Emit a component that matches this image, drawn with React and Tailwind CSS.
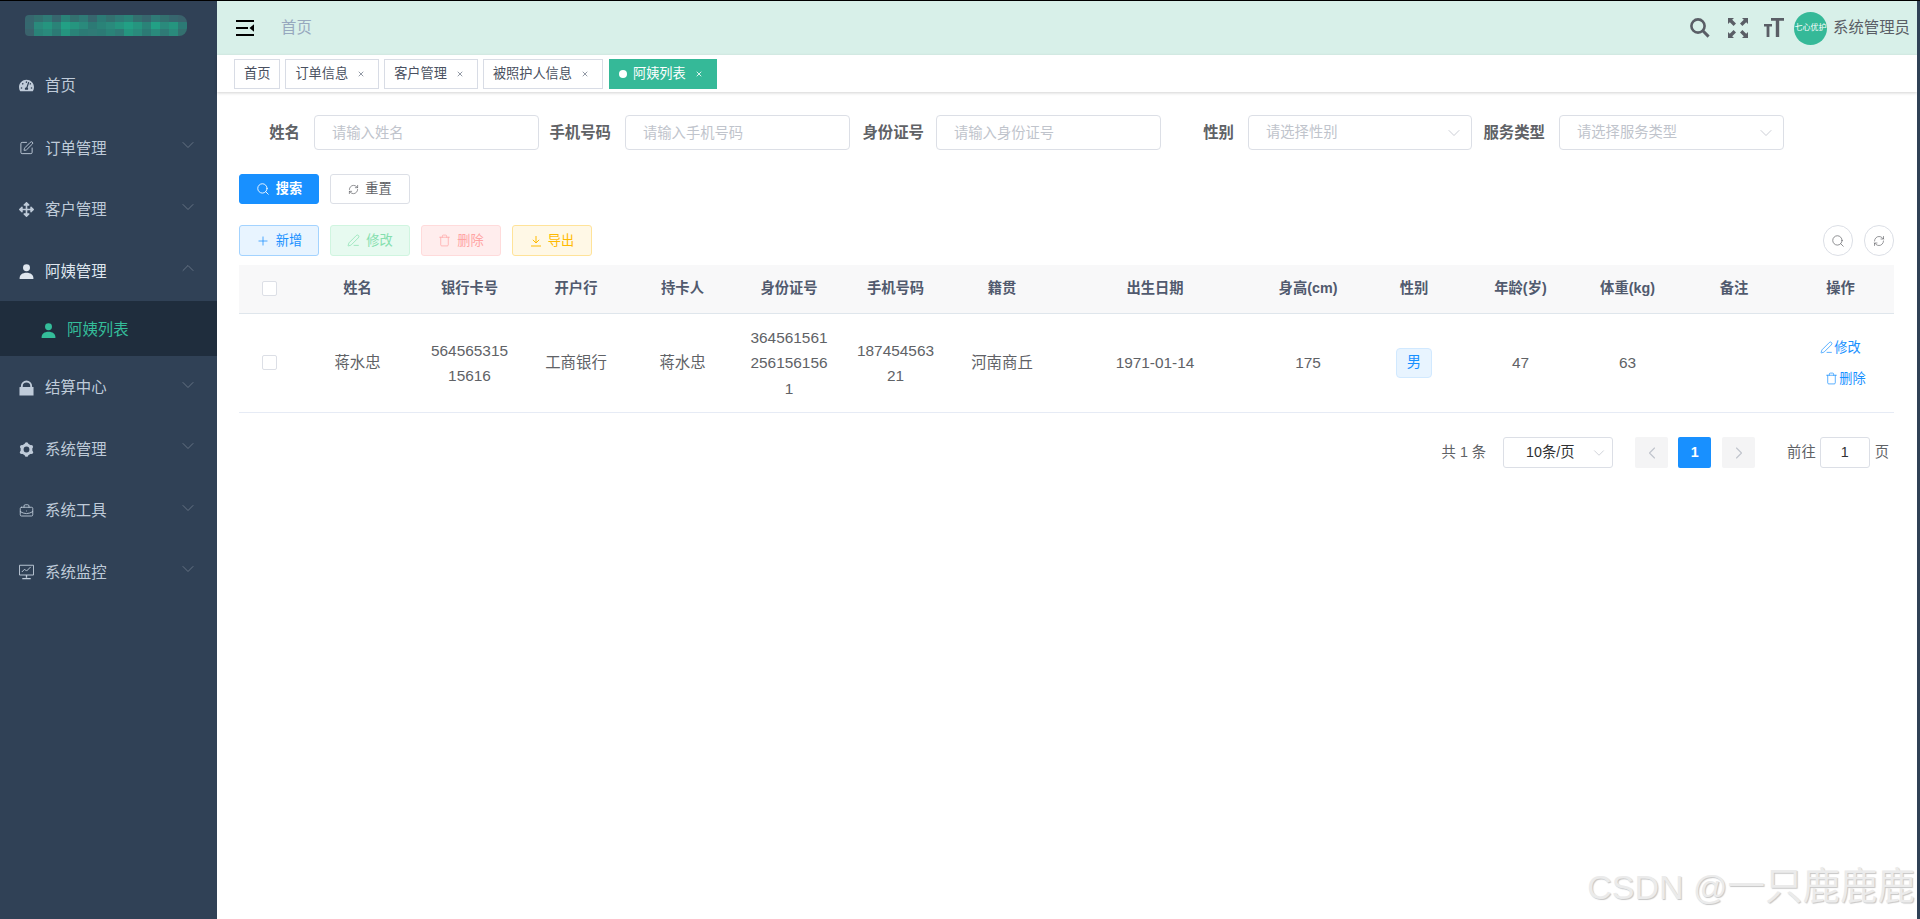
import { BriefcaseBusiness, ChevronDown, ChevronLeft, ChevronRight, ChevronUp, PenLine, Plus, RefreshCw, Search, SquarePen, Trash, X } from "lucide-react";
import { FaArrowsAlt, FaTachometerAlt } from "react-icons/fa";

const font = "font-['Liberation_Sans','Noto_Sans_CJK_SC',sans-serif]";

const UserIcon = ({ className }) => (
    <svg viewBox="0 0 16 16" className={className} fill="currentColor">
        <circle cx="8" cy="4" r="3.7" />
        <path d="M0.6 15.4c0-4 3-6.2 7.4-6.2s7.4 2.2 7.4 6.2c0 .3-.2.6-.6.6H1.2c-.4 0-.6-.3-.6-.6z" />
    </svg>
);

const LockIcon = ({ className }) => (
    <svg viewBox="0 0 16 16" className={className} fill="currentColor">
        <path d="M2 7V6a6 6 0 0 1 12 0v1h-2V6a4 4 0 0 0-8 0v1z" />
        <path d="M0.5 7.5c0-.4.3-.7.7-.7h13.6c.4 0 .7.3.7.7v8.4H0.5z" />
    </svg>
);

const GearIcon = ({ className }) => (
    <svg viewBox="0 0 16 16" className={className} fill="currentColor">
        <circle cx="8" cy="8" r="4.7" fill="none" stroke="currentColor" strokeWidth="3.2" />
        <circle cx="8" cy="2.2" r="2" />
        <circle cx="13" cy="5.1" r="2" />
        <circle cx="13" cy="10.9" r="2" />
        <circle cx="8" cy="13.8" r="2" />
        <circle cx="3" cy="10.9" r="2" />
        <circle cx="3" cy="5.1" r="2" />
    </svg>
);

const MonitorIcon = ({ className }) => (
    <svg viewBox="0 0 16 16" className={className} fill="none" stroke="currentColor" strokeWidth="1">
        <path d="M.5.8h15v10.4H.5z" />
        <path d="M3 8l3-3 2 2 4.5-4.5" />
        <path d="M8 11.2v3M3.5 15h9" strokeWidth="1.4" />
    </svg>
);

const menus = [
    { name: "首页", icon: <FaTachometerAlt className="w-[15px] h-[15px]" /> },
    { name: "订单管理", icon: <SquarePen className="w-[16px] h-[16px]" strokeWidth={1.5} />, arrow: true },
    { name: "客户管理", icon: <FaArrowsAlt className="w-[15px] h-[15px]" />, arrow: true },
    { name: "阿姨管理", icon: <UserIcon className="w-[15px] h-[15px]" />, arrow: true, open: true },
    { name: "结算中心", icon: <LockIcon className="w-[15px] h-[16px]" />, arrow: true },
    { name: "系统管理", icon: <GearIcon className="w-[15px] h-[15px]" />, arrow: true },
    { name: "系统工具", icon: <BriefcaseBusiness className="w-[16px] h-[16px]" strokeWidth={1.4} />, arrow: true },
    { name: "系统监控", icon: <MonitorIcon className="w-[15px] h-[16px]" />, arrow: true },
];

// mosaic that hides the logo in the reference
const logoRows = [
    ["#37666e", "#33706f", "#2f7a76", "#37666e", "#2a8378", "#33706f", "#2f7a76", "#37666e", "#2c7a75", "#33706f", "#2f7a76", "#2a8378", "#33706f", "#37666e", "#2f7a76", "#33706f", "#37666e", "#3a626c"],
    ["#35686f", "#2a8a7c", "#25957f", "#2a8378", "#22a085", "#25957f", "#2a8a7c", "#2c7a75", "#2a8378", "#2a8a7c", "#25957f", "#22a085", "#25957f", "#2a8378", "#22a085", "#2a8a7c", "#25957f", "#2c7a75"],
    ["#3a626c", "#2a8378", "#2a8a7c", "#2c7a75", "#25957f", "#2a8378", "#2c7a75", "#2f7a76", "#2c7a75", "#2a8378", "#2f7a76", "#25957f", "#2a8a7c", "#2c7a75", "#2a8a7c", "#2f7a76", "#2a8a7c", "#33706f"],
];

const Logo = () => (
    <svg width="162" height="21" viewBox="0 0 162 21" className="rounded-r-lg rounded-l-sm">
        {logoRows.map((row, r) => row.map((c, i) => (
            <rect key={`${r}-${i}`} x={i * 9} y={r * 7} width="9" height="7" fill={c} />
        )))}
    </svg>
);

const SideItem = ({ item }) => (
    <>
        <div className={`flex items-center h-[61.5px] pl-[19px] pr-[19px] text-[15.4px] ${item.arrow ? "pt-[2px]" : ""} ${item.open ? "text-[#dfe6ee]" : "text-[#bfcbd9]"}`}>
            <span className="w-[15px] flex justify-center shrink-0">{item.icon}</span>
            <span className="ml-[11px] flex-1">{item.name}</span>
            {item.arrow && (item.open
                ? <ChevronUp className="w-[20px] h-[20px] mb-[6px] text-[#6f7c8c]" strokeWidth={1} />
                : <ChevronDown className="w-[20px] h-[20px] mb-[6px] text-[#6f7c8c]" strokeWidth={1} />)}
        </div>
        {item.open && (
            <div className="flex items-center h-[55px] pl-[41px] pt-[3px] bg-[#1f2d3d] text-[15.4px] text-[#34bd9a]">
                <UserIcon className="w-[15px] h-[15px]" />
                <span className="ml-[11px]">阿姨列表</span>
            </div>
        )}
    </>
);

const tags = [
    { name: "首页", first: true },
    { name: "订单信息" },
    { name: "客户管理" },
    { name: "被照护人信息" },
];

const TextField = ({ label, labelClass, placeholder, select, boxClass }) => (
    <div className="flex items-center">
        <label className={`text-right font-bold text-[15.4px] text-[#606266] ${labelClass}`}>{label}</label>
        {select ? (
            <div className={`flex items-center justify-between h-[35px] pl-[17px] pr-[7px] border border-[#dcdfe6] rounded-[4px] text-[14.3px] text-[#c0c4cc] ${boxClass}`}>
                <span>{placeholder}</span>
                <ChevronDown className="w-[20px] h-[20px]" strokeWidth={1} />
            </div>
        ) : (
            <input readOnly placeholder={placeholder} className="w-[225px] h-[35px] pl-[17px] border border-[#dcdfe6] rounded-[4px] text-[14.3px] outline-none placeholder:text-[#c0c4cc]" />
        )}
    </div>
);

const Btn = ({ className, icon, children }) => (
    <button className={`flex items-center justify-center gap-[6px] w-[80px] border rounded-[3px] text-[13.2px] ${className}`}>
        {icon}
        <span>{children}</span>
    </button>
);

const DownIcon = () => (
    <svg viewBox="0 0 12 12" className="w-[12px] h-[12px]" fill="none" stroke="currentColor" strokeWidth="1">
        <path d="M6 1v6.5M2.8 4.8L6 8l3.2-3.2M1 11h10" />
    </svg>
);

const columns = [
    { title: "", w: "w-[60px]" },
    { title: "姓名", w: "w-[117px]" },
    { title: "银行卡号", w: "w-[107px]" },
    { title: "开户行", w: "w-[106px]" },
    { title: "持卡人", w: "w-[107px]" },
    { title: "身份证号", w: "w-[106px]" },
    { title: "手机号码", w: "w-[107px]" },
    { title: "籍贯", w: "w-[106px]" },
    { title: "出生日期", w: "w-[200px]" },
    { title: "身高(cm)", w: "w-[106px]" },
    { title: "性别", w: "w-[106px]" },
    { title: "年龄(岁)", w: "w-[107px]" },
    { title: "体重(kg)", w: "w-[107px]" },
    { title: "备注", w: "w-[106px]" },
    { title: "操作", w: "w-[107px]" },
];

const Check = () => <span className="block w-[15px] h-[15px] mx-auto border border-[#dcdfe6] rounded-[2px] bg-white" />;

const Td = ({ children }) => (
    <td className="px-[13px] py-[11.5px] text-center text-[15.4px] leading-[25.3px] text-[#606266] break-all">{children}</td>
);

const App = () => {
    return (
        <div className={`relative flex h-screen overflow-hidden bg-white border-t border-black ${font}`}>
            <aside className="w-[217px] shrink-0 bg-[#304156]">
                <div className="flex h-[54px] pl-[25px] pt-[14px]">
                    <Logo />
                </div>
                {menus.map((m) => <SideItem key={m.name} item={m} />)}
            </aside>

            <main className="flex-1 min-w-0 flex flex-col">
                <header className="flex items-center h-[54px] bg-[#d8f0e9] pl-[19px] pr-[7px]">
                    <svg viewBox="0 0 18 16" className="w-[18px] h-[16px] text-black" fill="currentColor">
                        <path d="M0 0h18v2H0zM0 7h12v2H0zM0 14h18v2H0zM18 4.2v7.6L13.5 8z" />
                    </svg>
                    <span className="ml-[27px] text-[15.4px] text-[#97a8be]">首页</span>
                    <div className="ml-auto flex items-center text-[#5a5e66]">
                        <svg viewBox="0 0 20 20" className="w-[20px] h-[20px]" fill="none" stroke="currentColor">
                            <circle cx="8" cy="8" r="6.6" strokeWidth="2.6" />
                            <path d="M12.8 12.8L18.6 18.6" strokeWidth="3" />
                        </svg>
                        <svg viewBox="0 0 20 20" className="ml-[18px] w-[20px] h-[20px]" fill="currentColor">
                            <path d="M0 0h6L4.2 1.8 8 5.6 5.6 8 1.8 4.2 0 6zM20 0v6l-1.8-1.8L14.4 8 12 5.6l3.8-3.8L14 0zM0 20v-6l1.8 1.8L5.6 12 8 14.4l-3.8 3.8L6 20zM20 20h-6l1.8-1.8L12 14.4l2.4-2.4 3.8 3.8L20 14z" />
                        </svg>
                        <svg viewBox="0 0 20 20" className="ml-[16px] w-[20px] h-[20px]" fill="currentColor">
                            <path d="M0 6h8v2.4H5.4V19H2.6V8.4H0zM7 0h13v2.8h-4.8V19h-3.4V2.8H7z" />
                        </svg>
                        <div className="ml-[10px] flex items-center justify-center w-[33px] h-[33px] rounded-full bg-[#35b998] text-[8px] text-white">七心优护</div>
                        <span className="ml-[6px] text-[15.4px]">系统管理员</span>
                    </div>
                </header>

                <div className="flex items-center gap-[5px] h-[37px] pl-[17px] shadow-[0_1px_3px_0_rgba(0,0,0,0.18)]">
                    {tags.map((t) => (
                        <div key={t.name} className={`flex items-center h-[30px] border border-[#d8dce5] text-[13.2px] text-[#495060] ${t.first ? "px-[9px]" : "pl-[9px] pr-[13px]"}`}>
                            <span>{t.name}</span>
                            {!t.first && <X className="ml-[9px] w-[8px] h-[8px] text-[#7d8594]" strokeWidth={2.5} />}
                        </div>
                    ))}
                    <div className="flex items-center h-[30px] ml-[1px] pl-[10px] pr-[14px] bg-[#35b998] text-[13.2px] text-white">
                        <span className="w-[8px] h-[8px] rounded-full bg-white" />
                        <span className="ml-[6px]">阿姨列表</span>
                        <X className="ml-[9px] w-[8px] h-[8px]" strokeWidth={2.5} />
                    </div>
                </div>

                <section className="flex-1 pl-[22px] pr-[23px]">
                    <div className="flex pt-[23px] -ml-[11px]">
                        <TextField label="姓名" labelClass="w-[72px] mr-[14px]" placeholder="请输入姓名" />
                        <TextField label="手机号码" labelClass="w-[72px] mr-[14px]" placeholder="请输入手机号码" />
                        <TextField label="身份证号" labelClass="w-[74px] mr-[12px]" placeholder="请输入身份证号" />
                        <TextField label="性别" labelClass="w-[73px] mr-[14px]" placeholder="请选择性别" select boxClass="w-[224px]" />
                        <TextField label="服务类型" labelClass="w-[73px] mr-[14px]" placeholder="请选择服务类型" select boxClass="w-[225px]" />
                    </div>

                    <div className="flex gap-[11px] mt-[24px] h-[30px]">
                        <Btn className="bg-[#1890ff] border-[#1890ff] text-white font-bold" icon={<Search className="w-[14px] h-[14px]" strokeWidth={1.5} />}>搜索</Btn>
                        <Btn className="bg-white border-[#dcdfe6] text-[#606266]" icon={<RefreshCw className="w-[11px] h-[11px]" strokeWidth={1.5} />}>重置</Btn>
                    </div>

                    <div className="flex items-center justify-between mt-[21px] h-[31px]">
                        <div className="flex gap-[11px] h-full">
                            <Btn className="bg-[#e8f4ff] border-[#a3d3ff] text-[#1890ff]" icon={<Plus className="w-[14px] h-[14px]" strokeWidth={1.3} />}>新增</Btn>
                            <Btn className="bg-[#e7faf0] border-[#d0f5e0] text-[#85dfae]" icon={<PenLine className="w-[13px] h-[13px]" strokeWidth={1.3} />}>修改</Btn>
                            <Btn className="bg-[#ffeded] border-[#ffdbdb] text-[#ffa4a4]" icon={<Trash className="w-[13px] h-[13px]" strokeWidth={1.3} />}>删除</Btn>
                            <Btn className="bg-[#fff8e6] border-[#ffe399] text-[#ffba00]" icon={<DownIcon />}>导出</Btn>
                        </div>
                        <div className="flex gap-[11px]">
                            <button className="flex items-center justify-center w-[30px] h-[31px] border border-[#dcdfe6] rounded-full text-[#606266]">
                                <Search className="w-[14px] h-[14px]" strokeWidth={1.2} />
                            </button>
                            <button className="flex items-center justify-center w-[30px] h-[31px] border border-[#dcdfe6] rounded-full text-[#606266]">
                                <RefreshCw className="w-[12px] h-[12px]" strokeWidth={1.3} />
                            </button>
                        </div>
                    </div>

                    <table className="mt-[9px] w-full table-fixed border-collapse">
                        <thead>
                            <tr className="h-[48px] bg-[#f8f8f9] border-b border-[#dfe6ec]">
                                {columns.map((c, i) => (
                                    <th key={i} className={`${c.w} text-center text-[14.3px] font-bold text-[#515a6e]`}>
                                        {i === 0 ? <Check /> : c.title}
                                    </th>
                                ))}
                            </tr>
                        </thead>
                        <tbody>
                            <tr className="border-b border-[#e6ebf5]">
                                <Td><Check /></Td>
                                <Td>蒋水忠</Td>
                                <Td>56456531515616</Td>
                                <Td>工商银行</Td>
                                <Td>蒋水忠</Td>
                                <Td>3645615612561561561</Td>
                                <Td>18745456321</Td>
                                <Td>河南商丘</Td>
                                <Td>1971-01-14</Td>
                                <Td>175</Td>
                                <Td>
                                    <span className="inline-flex items-center justify-center w-[36px] h-[30px] bg-[#e8f4ff] border border-[#d1e9ff] rounded-[4px] text-[14.3px] text-[#1890ff]">男</span>
                                </Td>
                                <Td>47</Td>
                                <Td>63</Td>
                                <Td></Td>
                                <td className="text-[13.2px] text-[#1890ff]">
                                    <div className="flex flex-col items-center gap-[12px]">
                                        <span className="flex items-center gap-[1px] leading-[19px]"><PenLine className="w-[13px] h-[13px]" strokeWidth={1.3} />修改</span>
                                        <span className="flex items-center gap-[1px] leading-[19px] ml-[10px]"><Trash className="w-[13px] h-[13px]" strokeWidth={1.3} />删除</span>
                                    </div>
                                </td>
                            </tr>
                        </tbody>
                    </table>

                    <div className="flex items-center justify-end h-[31px] mt-[24px] pr-[5px] text-[14.3px] text-[#606266]">
                        <span>共 1 条</span>
                        <div className="flex items-center justify-between w-[110px] h-[31px] ml-[17px] pl-[22px] pr-[4px] border border-[#dcdfe6] rounded-[3px] text-[#303133]">
                            <span>10条/页</span>
                            <ChevronDown className="w-[18px] h-[18px] text-[#c0c4cc]" strokeWidth={1} />
                        </div>
                        <div className="flex items-center justify-center w-[33px] h-[31px] ml-[22px] bg-[#f4f4f5] rounded-[2px] text-[#c0c4cc]">
                            <ChevronLeft className="w-[20px] h-[20px]" strokeWidth={1.3} />
                        </div>
                        <div className="flex items-center justify-center w-[33px] h-[31px] ml-[10px] bg-[#1890ff] rounded-[2px] font-bold text-white">1</div>
                        <div className="flex items-center justify-center w-[33px] h-[31px] ml-[11px] bg-[#f4f4f5] rounded-[2px] text-[#c0c4cc]">
                            <ChevronRight className="w-[20px] h-[20px]" strokeWidth={1.3} />
                        </div>
                        <span className="ml-[32px]">前往</span>
                        <div className="flex items-center justify-center w-[50px] h-[31px] ml-[4px] border border-[#dcdfe6] rounded-[3px] text-[#303133]">1</div>
                        <span className="ml-[5px]">页</span>
                    </div>
                </section>
            </main>

            <div className="w-[3px] shrink-0 bg-[#304156]" />

            <div className="absolute right-[5px] bottom-[12px] flex items-baseline leading-[40px] text-[#ebebeb] [text-shadow:1px_1px_1px_#c6c6c6]">
                <span className="text-[34px]">CSDN @</span>
                <span className="text-[37.5px]">一只鹿鹿鹿</span>
            </div>
        </div>
    );
};

export default App;
